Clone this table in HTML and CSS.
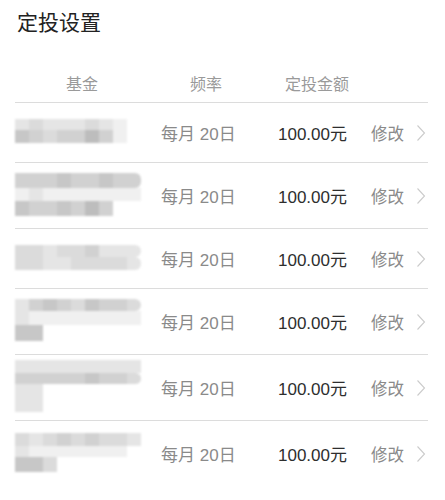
FILE: index.html
```html
<!DOCTYPE html>
<html lang="zh-CN">
<head>
<meta charset="utf-8">
<title>定投设置</title>
<link rel="stylesheet" href="styles.css">
</head>
<body>
<h1 class="title">定投设置</h1>
<div class="table">
  <div class="head">
    <span class="h-fund">基金</span>
    <span class="h-freq">频率</span>
    <span class="h-amt">定投金额</span>
  </div>

  <div class="row short">
    <div class="name">
      <div class="tier t11"><i class="s5"></i><i class="s4"></i><i class="s5"></i><i class="s5"></i><i class="s5"></i><i class="s4"></i><i class="s5"></i><i class="s6"></i></div>
      <div class="tier t13"><i class="s2"></i><i class="s3"></i><i class="s4"></i><i class="s3"></i><i class="s3"></i><i class="s1"></i><i class="s3"></i><i class="s6"></i></div>
    </div>
    <span class="freq">每月 20日</span>
    <span class="amt">100.00元</span>
    <span class="edit">修改</span>
    <svg class="chev" viewBox="0 0 10 18" width="10" height="18"><polyline points="1.5,1.5 8.5,9 1.5,16.5"/></svg>
  </div>

  <div class="row tall">
    <div class="name">
      <div class="tier t15 round"><i class="s3"></i><i class="s3"></i><i class="s3"></i><i class="s2"></i><i class="s3"></i><i class="s3"></i><i class="s2"></i><i class="s3"></i><i class="s3"></i></div>
      <div class="tier t13"><i class="s6"></i><i class="s5"></i><i class="s6"></i><i class="s6"></i><i class="s6"></i><i class="s6"></i><i class="s6"></i><i class="s6"></i><i class="s6"></i></div>
      <div class="tier t15"><i class="s2"></i><i class="s3"></i><i class="s3"></i><i class="s2"></i><i class="s3"></i><i class="s1"></i><i class="s3"></i></div>
    </div>
    <span class="freq">每月 20日</span>
    <span class="amt">100.00元</span>
    <span class="edit">修改</span>
    <svg class="chev" viewBox="0 0 10 18" width="10" height="18"><polyline points="1.5,1.5 8.5,9 1.5,16.5"/></svg>
  </div>

  <div class="row short">
    <div class="name">
      <div class="tier t12 round"><i class="s4"></i><i class="s4"></i><i class="s5"></i><i class="s4"></i><i class="s4"></i><i class="s3"></i><i class="s5"></i><i class="s5"></i><i class="s5"></i></div>
      <div class="tier t13 round"><i class="s4"></i><i class="s4"></i><i class="s5"></i><i class="s5"></i><i class="s4"></i><i class="s4"></i><i class="s4"></i><i class="s4"></i><i class="s5"></i></div>
    </div>
    <span class="freq">每月 20日</span>
    <span class="amt">100.00元</span>
    <span class="edit">修改</span>
    <svg class="chev" viewBox="0 0 10 18" width="10" height="18"><polyline points="1.5,1.5 8.5,9 1.5,16.5"/></svg>
  </div>

  <div class="row tall">
    <div class="name">
      <div class="tier t12 round"><i class="s5"></i><i class="s3"></i><i class="s2"></i><i class="s3"></i><i class="s4"></i><i class="s2"></i><i class="s3"></i><i class="s3"></i><i class="s4"></i></div>
      <div class="tier t14"><i class="s5"></i><i class="s6"></i><i class="s6"></i><i class="s6"></i><i class="s6"></i><i class="s6"></i><i class="s6"></i><i class="s6"></i><i class="s6"></i></div>
      <div class="tier t16"><i class="s2"></i><i class="s2"></i></div>
    </div>
    <span class="freq">每月 20日</span>
    <span class="amt">100.00元</span>
    <span class="edit">修改</span>
    <svg class="chev" viewBox="0 0 10 18" width="10" height="18"><polyline points="1.5,1.5 8.5,9 1.5,16.5"/></svg>
  </div>

  <div class="row tall">
    <div class="name">
      <div class="tier t13"><i class="s5"></i><i class="s5"></i><i class="s5"></i><i class="s5"></i><i class="s5"></i><i class="s5"></i><i class="s5"></i><i class="s5"></i><i class="s5"></i></div>
      <div class="tier t11 round"><i class="s3"></i><i class="s3"></i><i class="s3"></i><i class="s3"></i><i class="s3"></i><i class="s2"></i><i class="s3"></i><i class="s3"></i><i class="s4"></i></div>
      <div class="tier t28"><i class="s5"></i><i class="s5"></i></div>
    </div>
    <span class="freq">每月 20日</span>
    <span class="amt">100.00元</span>
    <span class="edit">修改</span>
    <svg class="chev" viewBox="0 0 10 18" width="10" height="18"><polyline points="1.5,1.5 8.5,9 1.5,16.5"/></svg>
  </div>

  <div class="row tall">
    <div class="name">
      <div class="tier t13"><i class="s4"></i><i class="s5"></i><i class="s4"></i><i class="s3"></i><i class="s4"></i><i class="s3"></i><i class="s4"></i><i class="s4"></i><i class="s5"></i></div>
      <div class="tier t11"><i class="s5"></i><i class="s6"></i><i class="s6"></i><i class="s6"></i><i class="s6"></i><i class="s6"></i><i class="s6"></i><i class="s6"></i></div>
      <div class="tier t15"><i class="s2"></i><i class="s2"></i><i class="s4"></i></div>
    </div>
    <span class="freq">每月 20日</span>
    <span class="amt">100.00元</span>
    <span class="edit">修改</span>
    <svg class="chev" viewBox="0 0 10 18" width="10" height="18"><polyline points="1.5,1.5 8.5,9 1.5,16.5"/></svg>
  </div>
</div>
</body>
</html>
```

FILE: styles.css
```css
* { box-sizing: border-box; }
html, body { margin: 0; padding: 0; background: #fff; }
body {
  font-family: "Liberation Sans", "Noto Sans CJK SC", sans-serif;
  color: #333;
  width: 445px;
  height: 500px;
  overflow: hidden;
}
.title {
  margin: 0;
  padding: 6px 0 0 17px;
  font-size: 21px;
  line-height: 30px;
  font-weight: 400;
  color: #222;
  font-family: "Noto Sans CJK SC", sans-serif;
}
.table {
  margin: 0 17px 0 15px;
}
.head {
  display: flex;
  align-items: center;
  height: 66px;
  padding-top: 28px;
  font-size: 16px;
  line-height: 20px;
  color: #9a9a9a;
  font-family: "Noto Sans CJK SC", sans-serif;
}
.h-fund { margin-left: 51px; }
.h-freq { margin-left: 92px; }
.h-amt { margin-left: 63px; }

.row {
  display: grid;
  grid-template-columns: 146px 117px 93px 45px 10px;
  align-items: center;
  border-top: 1px solid #dcdcdc;
  font-size: 17px;
}
.row.short { height: 60px; }
.row.tall { height: 66px; }

.freq { color: #8a8a8a; }
.amt { color: #2e2e2e; }
.edit { color: #8a8a8a; font-size: 16.5px; }
.chev { fill: none; stroke: #cbcbcb; stroke-width: 1.1; }

.name {
  display: flex;
  flex-direction: column;
  filter: blur(1.2px);
  margin-top: -3px;
}
.tier { display: flex; }
.tier.round i:last-child { border-radius: 0 6px 6px 0; }
.tier i { display: block; width: 14px; height: 100%; }
.t11 { height: 11px; }
.t12 { height: 12px; }
.t13 { height: 13px; }
.t14 { height: 14px; }
.t15 { height: 15px; }
.t16 { height: 16px; }
.t28 { height: 28px; }
.s1 { background: #bdbdbd; }
.s2 { background: #c7c7c7; }
.s3 { background: #d1d1d1; }
.s4 { background: #dbdbdb; }
.s5 { background: #e5e5e5; }
.s6 { background: #f0f0f0; }
```
